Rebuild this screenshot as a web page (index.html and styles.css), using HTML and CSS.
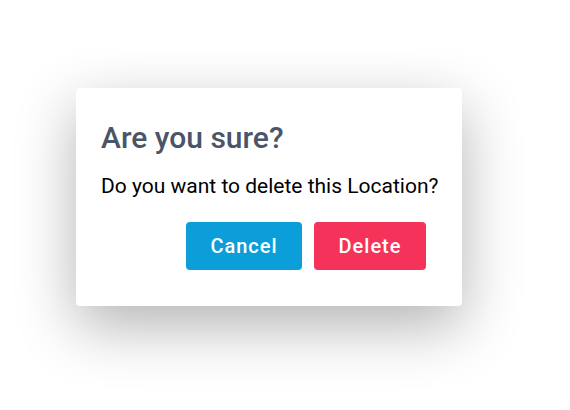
FILE: index.html
```html
<!DOCTYPE html>
<html lang="en">
<head>
<meta charset="utf-8">
<title>Confirm delete</title>
<link rel="stylesheet" href="styles.css">
</head>
<body>
<div class="stage">
  <div class="dialog" role="alertdialog" aria-labelledby="dlg-title">
    <h2 class="dialog-title" id="dlg-title">Are you sure?</h2>
    <p class="dialog-text">Do you want to delete this Location?</p>
    <div class="dialog-actions">
      <button class="btn btn-cancel" type="button">Cancel</button>
      <button class="btn btn-delete" type="button">Delete</button>
    </div>
  </div>
</div>
</body>
</html>
```
FILE: styles.css
```css
html, body {
  margin: 0;
  background: #ffffff;
}

body {
  font-family: Roboto, "Noto Sans", Arial, sans-serif;
}

.stage {
  min-height: 410px;
  box-sizing: border-box;
  padding: 88px 0 0 76px;
}

.dialog {
  width: 386px;
  height: 218px;
  box-sizing: border-box;
  padding: 32px 36px 0 25px;
  background: #ffffff;
  border-radius: 4px;
  box-shadow: 0 20px 60px rgba(0, 0, 0, 0.3);
}

.dialog-title {
  margin: 0;
  font-size: 30px;
  line-height: 36px;
  font-weight: 500;
  color: #4a5568;
}

.dialog-text {
  margin: 18px 0 0;
  font-size: 21px;
  line-height: 24px;
  white-space: nowrap;
  color: #000000;
}

.dialog-actions {
  display: flex;
  justify-content: flex-end;
  gap: 12px;
  margin-top: 24px;
}

.btn {
  height: 48px;
  padding: 0;
  border: 0;
  border-radius: 4px;
  font-family: inherit;
  font-size: 20px;
  font-weight: 500;
  letter-spacing: 1px;
  color: #ffffff;
  cursor: pointer;
}

.btn-cancel {
  width: 116px;
  background: #0c9ed8;
}

.btn-delete {
  width: 112px;
  background: #f53259;
}
```
